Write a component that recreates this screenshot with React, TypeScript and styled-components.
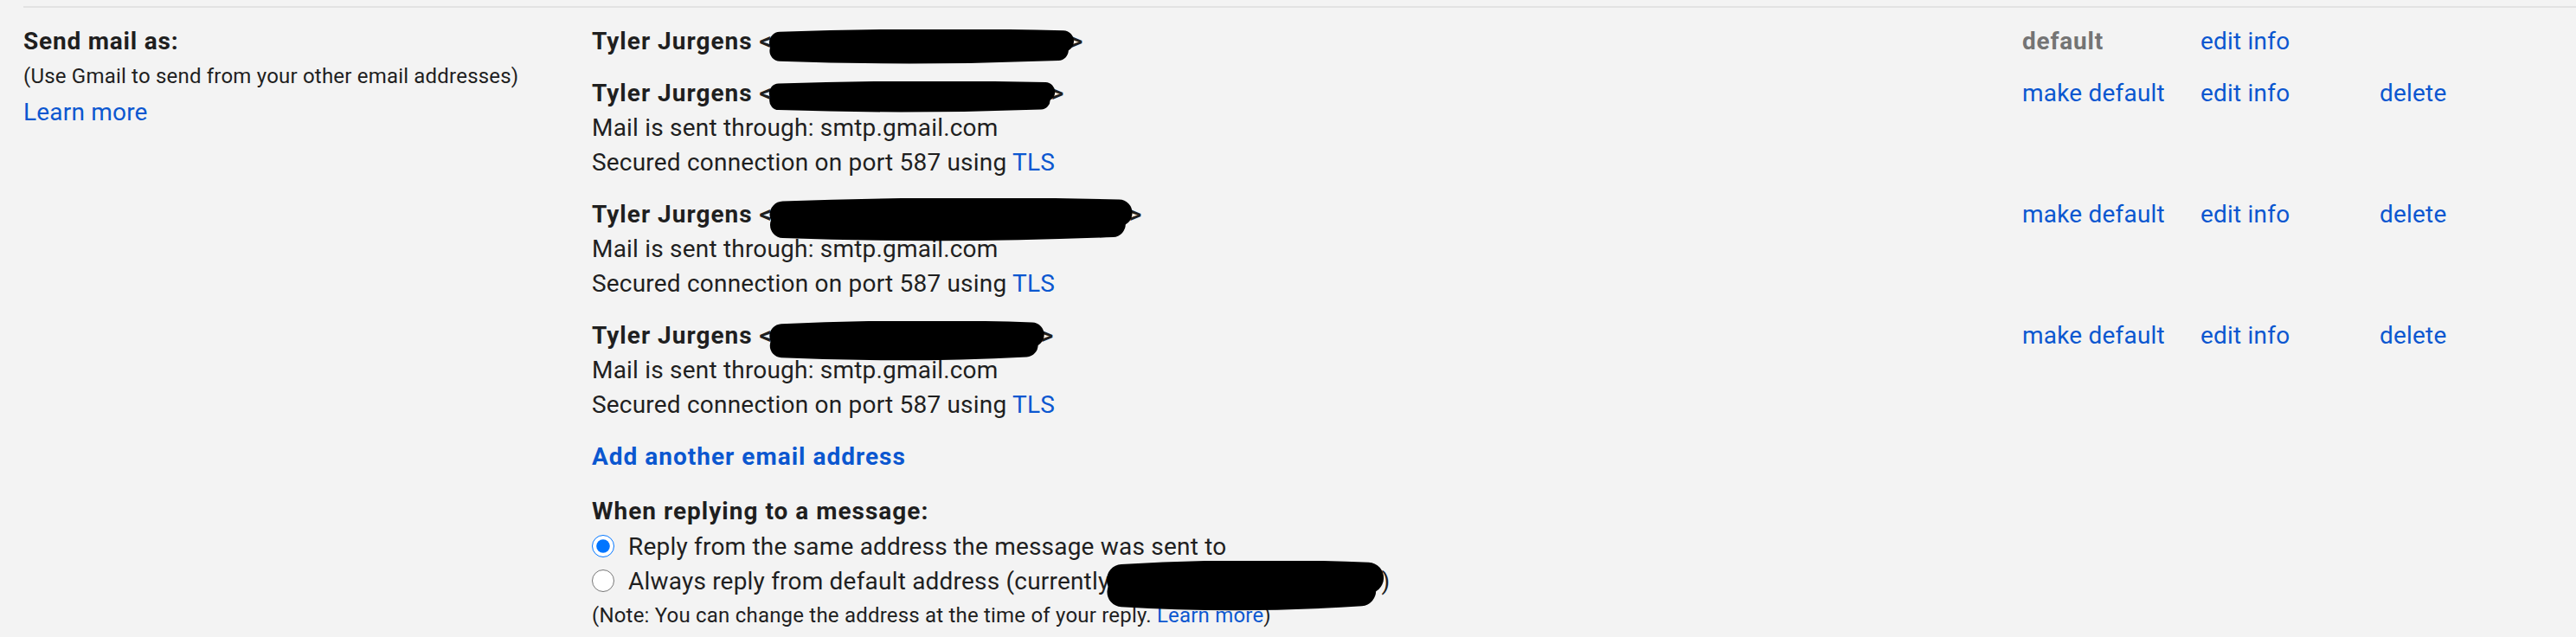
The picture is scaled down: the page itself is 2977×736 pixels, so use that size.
import styled, { createGlobalStyle } from "styled-components";

const GlobalStyle = createGlobalStyle`
  html, body {
    margin: 0;
    padding: 0;
    background: #f3f3f3;
  }
  body {
    font-family: Roboto, "Liberation Sans", Arial, sans-serif;
    color: #1f1f1f;
    font-size: 28px;
    letter-spacing: 0.2px;
  }
`;

const Page = styled.div`
  width: 2977px;
  height: 736px;
  overflow: hidden;
  background: #f3f3f3;
`;

const Section = styled.section`
  margin: 7px 0 0 27px;
  border-top: 2px solid #e2e2e2;
  padding-top: 19px;
  display: grid;
  grid-template-columns: 657px 1fr;
`;

const LabelCol = styled.div`
  display: flex;
  flex-direction: column;
`;

const Title = styled.div`
  font-weight: 700;
  font-size: 28px;
  line-height: 40px;
  letter-spacing: 0.8px;
`;

const Hint = styled.div`
  font-size: 24px;
  line-height: 40px;
`;

const Link = styled.a<{ $small?: boolean }>`
  color: #0b57d0;
  text-decoration: none;
  font-size: ${(p) => (p.$small ? "24px" : "28px")};
  line-height: ${(p) => (p.$small ? "40px" : "44px")};
  cursor: pointer;
`;

const Content = styled.div`
  display: flex;
  flex-direction: column;
`;

const AccountRow = styled.div`
  display: grid;
  grid-template-columns: 1fr 206px 207px 227px;
  padding-bottom: 20px;
`;

const Info = styled.div`
  display: flex;
  flex-direction: column;
`;

const Line = styled.div`
  line-height: 40px;
  height: 40px;
  white-space: nowrap;
`;

const Name = styled(Line)`
  font-weight: 700;
  letter-spacing: 1px;
`;

const Action = styled.div<{ $muted?: boolean }>`
  line-height: 40px;
  white-space: nowrap;
  color: ${(p) => (p.$muted ? "#747474" : "#0b57d0")};
  font-weight: ${(p) => (p.$muted ? 700 : 400)};
  letter-spacing: ${(p) => (p.$muted ? "0.8px" : "0.2px")};
  cursor: ${(p) => (p.$muted ? "default" : "pointer")};
`;

const Blue = styled.span`
  color: #0b57d0;
`;

const AddLink = styled.div`
  color: #0b57d0;
  font-weight: 700;
  letter-spacing: 1px;
  line-height: 40px;
  cursor: pointer;
`;

const ReplyTitle = styled.div`
  margin-top: 23px;
  font-weight: 700;
  letter-spacing: 1px;
  line-height: 40px;
`;

const RadioRow = styled.label`
  display: flex;
  align-items: center;
  height: 40px;
  white-space: nowrap;
`;

const Radio = styled.input`
  width: 26px;
  height: 26px;
  margin: 0 16px 0 0;
  accent-color: #0075ff;
`;

const Note = styled.div`
  font-size: 24px;
  line-height: 40px;
`;

// marker scribble hiding an address; it sits over the text, so it takes no line height
const Scribble = styled.svg<{ $shift: number }>`
  display: inline-block;
  vertical-align: middle;
  position: relative;
  top: ${(p) => p.$shift}px;
  margin: -40px -6px;
`;

function Redaction({ w, h, shift = 0 }: { w: number; h: number; shift?: number }) {
  const r = h * 0.36;
  return (
    <Scribble width={w} height={h} viewBox={`0 0 ${w} ${h}`} $shift={shift}>
      <path
        d={`M${r},${h * 0.38} C${w * 0.3},${h * 0.3} ${w * 0.6},${h * 0.26} ${w - r},${h * 0.34}`}
        stroke="#000"
        strokeWidth={h * 0.62}
        strokeLinecap="round"
        fill="none"
      />
      <path
        d={`M${r},${h * 0.62} C${w * 0.3},${h * 0.7} ${w * 0.6},${h * 0.72} ${w - r * 1.4},${h * 0.6}`}
        stroke="#000"
        strokeWidth={h * 0.6}
        strokeLinecap="round"
        fill="none"
      />
    </Scribble>
  );
}

type Account = {
  blob: { w: number; h: number; shift: number };
  isDefault?: boolean;
  smtp?: boolean;
};

const accounts: Account[] = [
  { blob: { w: 356, h: 40, shift: 4 }, isDefault: true },
  { blob: { w: 334, h: 36, shift: 2 }, smtp: true },
  { blob: { w: 424, h: 50, shift: 4 }, smtp: true },
  { blob: { w: 322, h: 46, shift: 4 }, smtp: true },
];

export default function App() {
  return (
    <>
      <GlobalStyle />
      <Page>
        <Section>
          <LabelCol>
            <Title>Send mail as:</Title>
            <Hint>(Use Gmail to send from your other email addresses)</Hint>
            <Link>Learn more</Link>
          </LabelCol>
          <Content>
            {accounts.map((a, i) => (
              <AccountRow key={i}>
                <Info>
                  <Name>
                    Tyler Jurgens &lt;
                    <Redaction w={a.blob.w} h={a.blob.h} shift={a.blob.shift} />
                    &gt;
                  </Name>
                  {a.smtp && (
                    <>
                      <Line>Mail is sent through: smtp.gmail.com</Line>
                      <Line>
                        Secured connection on port 587 using <Blue>TLS</Blue>
                      </Line>
                    </>
                  )}
                </Info>
                {a.isDefault ? (
                  <Action $muted>default</Action>
                ) : (
                  <Action>make default</Action>
                )}
                <Action>edit info</Action>
                {a.isDefault ? <div /> : <Action>delete</Action>}
              </AccountRow>
            ))}
            <AddLink>Add another email address</AddLink>
            <ReplyTitle>When replying to a message:</ReplyTitle>
            <RadioRow>
              <Radio type="radio" name="reply" defaultChecked />
              Reply from the same address the message was sent to
            </RadioRow>
            <RadioRow>
              <Radio type="radio" name="reply" />
              Always reply from default address (currently
              <Redaction w={326} h={58} shift={6} />)
            </RadioRow>
            <Note>
              (Note: You can change the address at the time of your reply.{" "}
              <Link $small>Learn more</Link>)
            </Note>
          </Content>
        </Section>
      </Page>
    </>
  );
}
